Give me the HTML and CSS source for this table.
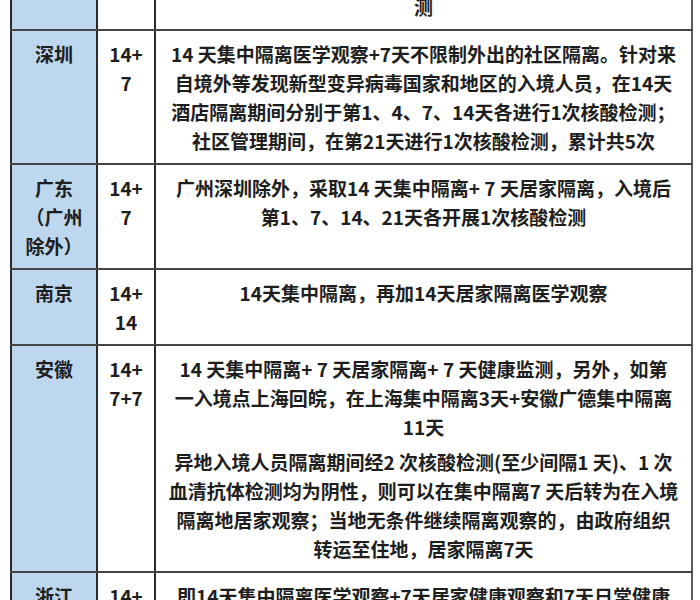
FILE: index.html
```html
<!DOCTYPE html>
<html lang="zh-CN">
<head>
<meta charset="utf-8">
<title>入境隔离政策</title>
<link rel="stylesheet" href="styles.css">
</head>
<body>
<div class="page">
<table class="policy">
  <colgroup>
    <col class="c-region">
    <col class="c-days">
    <col class="c-desc">
  </colgroup>
  <tbody>
    <tr class="cut">
      <td class="region"></td>
      <td class="days"></td>
      <td class="desc">测</td>
    </tr>
    <tr>
      <td class="region">深圳</td>
      <td class="days">14+<br>7</td>
      <td class="desc">14 天集中隔离医学观察+7天不限制外出的社区隔离。针对来<br>自境外等发现新型变异病毒国家和地区的入境人员，在14天<br>酒店隔离期间分别于第1、4、7、14天各进行1次核酸检测；<br>社区管理期间，在第21天进行1次核酸检测，累计共5次</td>
    </tr>
    <tr>
      <td class="region">广东<br>（广州<br>除外）</td>
      <td class="days">14+<br>7</td>
      <td class="desc">广州深圳除外，采取14 天集中隔离+ 7 天居家隔离，入境后<br>第1、7、14、21天各开展1次核酸检测</td>
    </tr>
    <tr>
      <td class="region">南京</td>
      <td class="days">14+<br>14</td>
      <td class="desc">14天集中隔离，再加14天居家隔离医学观察</td>
    </tr>
    <tr>
      <td class="region">安徽</td>
      <td class="days">14+<br>7+7</td>
      <td class="desc">
        <p class="para">14 天集中隔离+ 7 天居家隔离+ 7 天健康监测，另外，如第<br>一入境点上海回皖，在上海集中隔离3天+安徽广德集中隔离<br>11天</p>
        <p class="para">异地入境人员隔离期间经2 次核酸检测(至少间隔1 天)、1 次<br>血清抗体检测均为阴性，则可以在集中隔离7 天后转为在入境<br>隔离地居家观察；当地无条件继续隔离观察的，由政府组织<br>转运至住地，居家隔离7天</p>
      </td>
    </tr>
    <tr>
      <td class="region">浙江</td>
      <td class="days">14+<br>7+7</td>
      <td class="desc">即14天集中隔离医学观察+7天居家健康观察和7天日常健康<br>监测</td>
    </tr>
  </tbody>
</table>
</div>
</body>
</html>
```

FILE: styles.css
```css
html, body {
  margin: 0;
  padding: 0;
  background: #ffffff;
}

.page {
  padding-left: 10px;
  overflow: hidden;
  height: 600px;
}

.policy {
  margin-top: -8px;
  width: 681px;
  table-layout: fixed;
  border-collapse: collapse;
  font-family: "Noto Sans CJK SC", "Noto Sans", sans-serif;
  font-size: 19px;
  font-weight: 700;
  line-height: 29px;
  color: #1e1e1e;
}

.c-region { width: 86px; }
.c-days { width: 58px; }
.c-desc { width: 537px; }

.policy td {
  border: 2px solid #454545;
  padding: 8px 4px;
  vertical-align: top;
  text-align: center;
}

.policy td.region {
  background: #bdd7ee;
  border-left-color: #2a2a2a;
  border-right-color: #2a2a2a;
}

.policy td.days {
  border-right-color: #2a2a2a;
}

.policy td.desc {
  padding-left: 8px;
  padding-right: 8px;
  border-right-color: #5a5a5a;
}

.policy tr.cut td {
  padding-top: 0;
  border-top: none;
}

.para {
  margin: 0;
}

.para + .para {
  margin-top: 6px;
}
```
